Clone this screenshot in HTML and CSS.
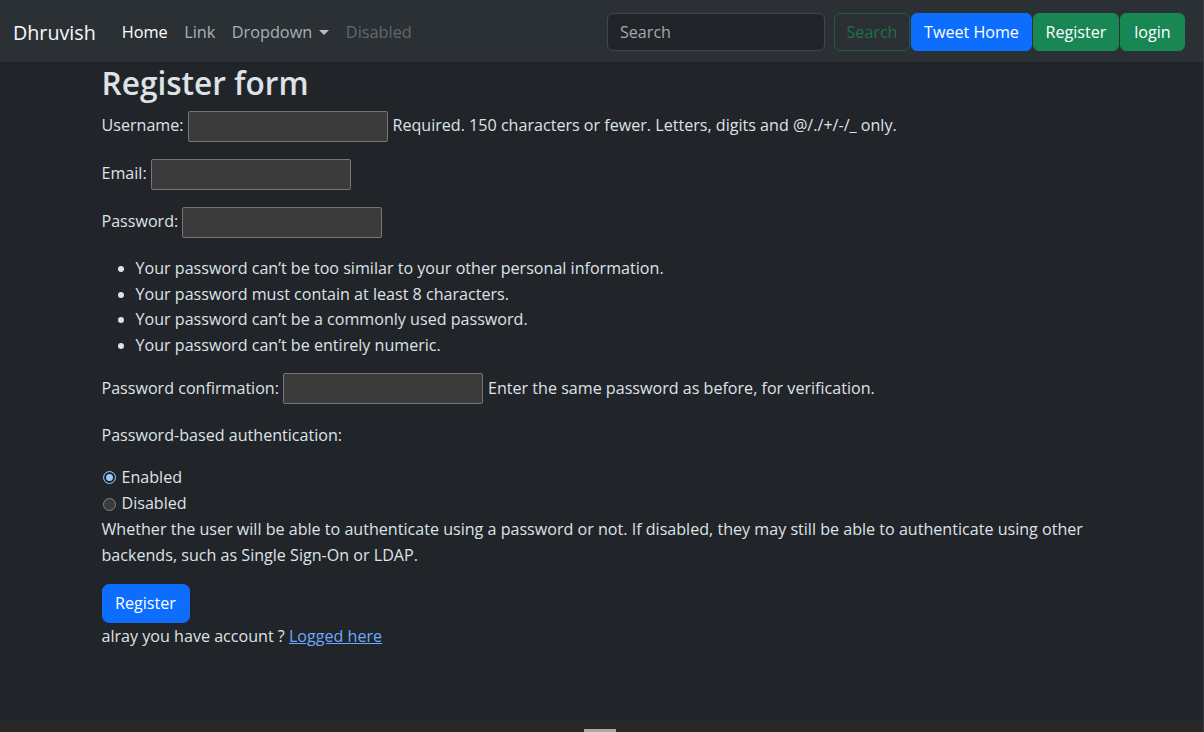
FILE: index.html
```html
<!DOCTYPE html>
<html lang="en">
<head>
<meta charset="utf-8">
<title>Register</title>
<link rel="stylesheet" href="styles.css">
</head>
<body>
<div class="page">
  <nav class="navbar">
    <a class="brand" href="#">Dhruvish</a>
    <ul class="nav">
      <li><a class="nav-link active" href="#">Home</a></li>
      <li><a class="nav-link" href="#">Link</a></li>
      <li><a class="nav-link dropdown" href="#">Dropdown <span class="caret"></span></a></li>
      <li><a class="nav-link disabled" href="#">Disabled</a></li>
    </ul>
    <form class="nav-form">
      <input class="search-input" type="search" placeholder="Search">
      <button class="btn btn-outline" type="button">Search</button>
    </form>
    <div class="nav-buttons">
      <a class="btn btn-primary btn-tweet" href="#">Tweet Home</a>
      <a class="btn btn-success btn-reg" href="#">Register</a>
      <a class="btn btn-success btn-login" href="#">login</a>
    </div>
  </nav>

  <main class="content">
    <div class="container">
      <h2 class="title">Register form</h2>
      <form class="reg-form">
        <div class="row"><label>Username:</label><input class="field" type="text"><span class="help">Required. 150 characters or fewer. Letters, digits and @/./+/-/_ only.</span></div>
        <div class="row"><label>Email:</label><input class="field" type="email"></div>
        <div class="row"><label>Password:</label><input class="field" type="password"></div>
        <ul class="rules">
          <li>Your password can’t be too similar to your other personal information.</li>
          <li>Your password must contain at least 8 characters.</li>
          <li>Your password can’t be a commonly used password.</li>
          <li>Your password can’t be entirely numeric.</li>
        </ul>
        <div class="row row-confirm"><label>Password confirmation:</label><input class="field" type="password"><span class="help">Enter the same password as before, for verification.</span></div>
        <p class="auth-label">Password-based authentication:</p>
        <div class="radios">
          <label class="radio"><span class="dot on"></span>Enabled</label>
          <label class="radio"><span class="dot"></span>Disabled</label>
        </div>
        <p class="auth-help">Whether the user will be able to authenticate using a password or not. If disabled, they may still be able to authenticate using other backends, such as Single Sign-On or LDAP.</p>
        <button class="btn btn-primary btn-submit" type="button">Register</button>
        <p class="account">alray you have account ? <a href="#">Logged here</a></p>
      </form>
    </div>
  </main>

  <div class="bottom-strip"><span class="handle"></span></div>
</div>
</body>
</html>
```

FILE: styles.css
```css
* { box-sizing: border-box; }

html, body {
  margin: 0;
  padding: 0;
  height: 100%;
}

body {
  background: #212529;
  color: #dee2e6;
  font-family: "Open Sans", "Noto Sans", Arial, sans-serif;
  font-size: 16.1px;
  overflow: hidden;
}

.page {
  height: 732px;
  display: flex;
  flex-direction: column;
  border-right: 1px solid #3a3c3f;
}

/* Navbar */
.navbar {
  height: 62px;
  flex: 0 0 62px;
  background: #2b3035;
  display: flex;
  align-items: center;
  padding: 2px 0 0 13px;
}

.brand {
  color: #f8f9fa;
  font-size: 19.7px;
  text-decoration: none;
  margin-right: 26px;
}

.nav {
  list-style: none;
  display: flex;
  margin: 0;
  padding: 0;
  flex: 1;
}

.nav-link {
  display: block;
  padding: 8px 8.2px;
  color: rgba(222, 226, 230, 0.72);
  text-decoration: none;
  font-size: 16.3px;
}

.nav li:first-child .nav-link { padding-left: 0; }

.nav-link.active { color: #ffffff; }
.nav-link.disabled { color: rgba(222, 226, 230, 0.33); }

.caret {
  display: inline-block;
  width: 0;
  height: 0;
  margin-left: 3px;
  vertical-align: 3px;
  border-top: 5px solid rgba(222, 226, 230, 0.8);
  border-left: 5px solid transparent;
  border-right: 5px solid transparent;
}

.nav-form {
  display: flex;
  align-items: center;
  margin-right: 1px;
}

.search-input {
  width: 218px;
  height: 38px;
  background: #212529;
  border: 1px solid #43484d;
  border-radius: 6px;
  color: #dee2e6;
  padding: 0 12px;
  font-family: inherit;
  font-size: 16.1px;
  margin-right: 9px;
}

.search-input::placeholder { color: #a5a8ab; }

.btn {
  display: inline-flex;
  align-items: center;
  justify-content: center;
  height: 38px;
  padding: 0;
  border-radius: 6px;
  border: 1px solid transparent;
  font-family: inherit;
  font-size: 16.1px;
  text-decoration: none;
  color: #fff;
}

.btn-outline {
  background: transparent;
  border-color: #1d5e40;
  color: #1e7049;
  width: 76px;
}

.btn-primary { background: #0d6efd; border-color: #0d6efd; }
.btn-success { background: #198754; border-color: #198754; }

.nav-buttons {
  display: flex;
  gap: 1px;
  margin-right: 18px;
}

.btn-tweet { width: 121px; }
.btn-reg { width: 86px; }
.btn-login { width: 65px; }

/* Content */
.content {
  flex: 1;
}

.container {
  width: 1000px;
  margin: 0 auto;
}

.title {
  font-size: 31.6px;
  font-weight: 600;
  line-height: 42px;
  margin: 0 0 6px;
  color: #dee2e6;
}

.reg-form {
  line-height: 25.7px;
}

.row {
  display: flex;
  align-items: center;
  height: 32px;
  margin-bottom: 16px;
  white-space: nowrap;
}

.field {
  width: 200px;
  height: 31px;
  background: #3b3b3b;
  border: 1px solid #767676;
  border-radius: 2px;
  margin: 0 5px 0 4px;
  color: #fff;
  font-family: inherit;
}

.rules {
  margin: 18px 0 14px;
  padding-left: 34px;
}

.auth-label {
  margin: 18px 0 16px;
}

.radios {
  display: flex;
  flex-direction: column;
}

.radio {
  display: flex;
  align-items: center;
  height: 26.5px;
}

.dot {
  width: 13px;
  height: 13px;
  border-radius: 50%;
  margin: 0 6px 0 1px;
  background: #3b3b3b;
  border: 1px solid #858585;
}

.dot.on {
  background: #1d1d1d;
  border: 1px solid #99c8ff;
  box-shadow: inset 0 0 0 2px #1d1d1d, inset 0 0 0 7px #99c8ff;
}

.auth-help {
  margin: -2px 0 15px;
  line-height: 26.5px;
}

.btn-submit {
  width: 88px;
  height: 39px;
  border-radius: 7px;
}

.account {
  margin: 1px 0 0;
}

.account a {
  color: #6ea8fe;
}

/* bottom strip */
.bottom-strip {
  flex: 0 0 12px;
  background: #282828;
  display: flex;
  justify-content: center;
  align-items: flex-end;
}

.handle {
  width: 32px;
  height: 3px;
  background: #a8a8a8;
  margin-right: 3px;
}
```
